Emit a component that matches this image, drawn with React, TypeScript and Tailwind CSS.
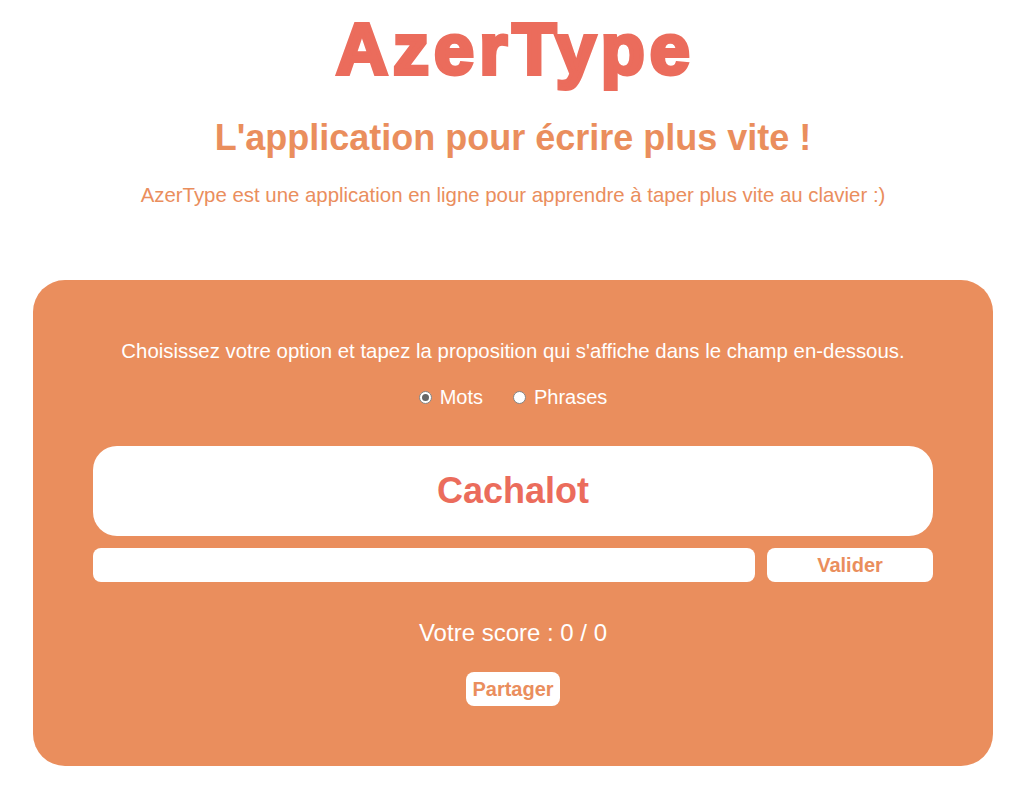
import React, { useState } from "react";

const Radio = ({ checked, label, onSelect }: { checked: boolean; label: string; onSelect: () => void }) => (
  <label className="flex items-center cursor-pointer" onClick={onSelect}>
    <span className="flex items-center justify-center w-[13px] h-[13px] rounded-full border border-[#858585] bg-white">
      {checked && <span className="w-[7px] h-[7px] rounded-full bg-[#666666]" />}
    </span>
    <span className="ml-[8px] text-[20px] leading-none text-white">{label}</span>
  </label>
);

export default function App() {
  const [mode, setMode] = useState<"mots" | "phrases">("mots");
  const [value, setValue] = useState("");

  return (
    <div className="min-h-screen bg-white font-['Liberation_Sans',Arial,sans-serif]">
      <div className="w-[960px] ml-[33px] flex flex-col items-center text-center">
        <h1 className="mt-[13px] pl-[5px] text-[72px] leading-none font-bold tracking-[5px] text-[#eb6c5c] [-webkit-text-stroke:4px_#eb6c5c]">
          AzerType
        </h1>
        <h2 className="mt-[35px] text-[36px] leading-none font-bold text-[#ea8e5d]">
          L'application pour écrire plus vite !
        </h2>
        <p className="mt-[29px] h-[20px] text-[20.4px] leading-[20px] text-[#ea8e5d]">
          AzerType est une application en ligne pour apprendre à taper plus vite au clavier :)
        </p>

        {/* Zone de jeu */}
        <section className="mt-[75px] w-full rounded-[32px] bg-[#ea8e5d] p-[60px] flex flex-col items-center">
          <p className="mt-[1px] h-[20px] text-[20.4px] leading-[20px] text-white">
            Choisissez votre option et tapez la proposition qui s'affiche dans le champ en-dessous.
          </p>
          <div className="mt-[26px] h-[20px] flex items-center gap-[30px]">
            <Radio checked={mode === "mots"} label="Mots" onSelect={() => setMode("mots")} />
            <Radio checked={mode === "phrases"} label="Phrases" onSelect={() => setMode("phrases")} />
          </div>
          <div className="mt-[39px] w-full h-[90px] rounded-[24px] bg-white flex items-center justify-center">
            <span className="text-[36px] leading-none font-bold text-[#eb6c5c]">Cachalot</span>
          </div>
          <div className="mt-[12px] w-full flex gap-[12px]">
            <input
              value={value}
              onChange={(e) => setValue(e.target.value)}
              className="flex-1 h-[34px] rounded-lg bg-white px-3 text-[18px] outline-none"
            />
            <button className="w-[166px] h-[34px] rounded-lg bg-white text-[20px] font-bold text-[#ea8e5d]">
              Valider
            </button>
          </div>
          <p className="mt-[39px] text-[24px] leading-none text-white">Votre score : 0 / 0</p>
          <button className="mt-[27px] h-[34px] px-[6px] rounded-lg bg-white text-[20px] font-bold text-[#ea8e5d]">
            Partager
          </button>
        </section>
      </div>
    </div>
  );
}
